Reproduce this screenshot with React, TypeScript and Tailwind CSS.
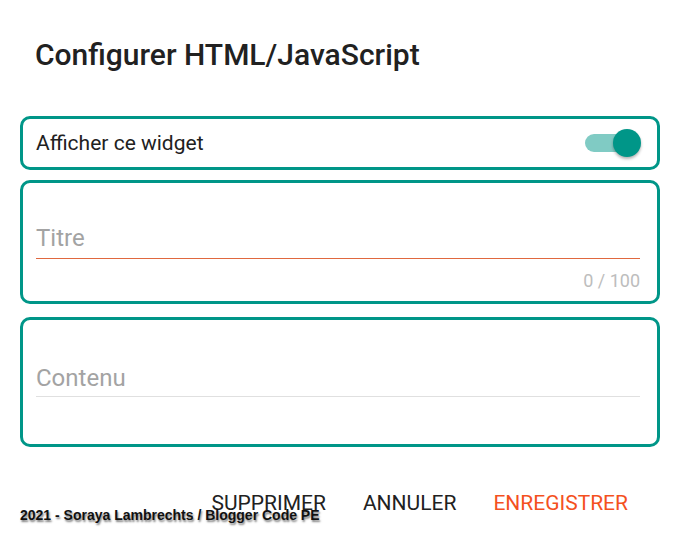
import React from "react";

export default function App() {
  return (
    <div className="relative w-[677px] h-[553px] bg-white overflow-hidden font-['Roboto',sans-serif] text-[#212121]">
      <h1 className="pl-[35px] pt-[37px] text-[30px] leading-[36px] font-medium text-[#212121]">
        Configurer HTML/JavaScript
      </h1>

      <div className="ml-[20px] mr-[17px] mt-[43px] flex flex-col">
        {/* Card 1 */}
        <div className="h-[54px] rounded-[10px] border-[3px] border-[#009688] pl-[13px] pr-[16px] flex items-center justify-between">
          <span className="text-[21px] leading-[24px] text-[#212121]">Afficher ce widget</span>
          <div className="relative w-[56px] h-[28px]">
            <div className="absolute left-0 top-[5px] w-[46px] h-[18px] rounded-full bg-[#80cbc4]" />
            <div className="absolute right-0 top-0 w-[28px] h-[28px] rounded-full bg-[#009688] shadow-[0_2px_3px_rgba(0,0,0,0.3)]" />
          </div>
        </div>

        {/* Card 2 */}
        <div className="mt-[10px] h-[124px] rounded-[10px] border-[3px] border-[#009688] pl-[13px] pr-[17px] pt-[41px] flex flex-col">
          <span className="text-[24px] leading-[28px] text-[#a3a3a3]">Titre</span>
          <div className="mt-[6px] h-px bg-[#e0683f]" />
          <div className="mt-[12px] text-right text-[18px] leading-[20px] text-[#bdbdbd]">0 / 100</div>
        </div>

        {/* Card 3 */}
        <div className="mt-[13px] h-[130px] rounded-[10px] border-[3px] border-[#009688] pl-[13px] pr-[17px] pt-[44px] flex flex-col">
          <span className="text-[24px] leading-[28px] text-[#a3a3a3]">Contenu</span>
          <div className="mt-[4px] h-px bg-[#e0e0e0]" />
        </div>
      </div>

      <div className="mt-[44px] flex justify-end gap-[37px] pr-[49px] text-[21px] leading-[24px]">
        <span className="text-[#212121]">SUPPRIMER</span>
        <span className="text-[#212121]">ANNULER</span>
        <span className="text-[#f4511e]">ENREGISTRER</span>
      </div>

      <div className="absolute left-[20px] top-[507px] font-['Liberation_Sans',Arial,sans-serif] font-bold text-[14px] leading-[16px] text-[#111] [text-shadow:1px_2px_2px_rgba(0,0,0,0.5)]">
        2021 - Soraya Lambrechts / Blogger Code PE
      </div>
    </div>
  );
}
